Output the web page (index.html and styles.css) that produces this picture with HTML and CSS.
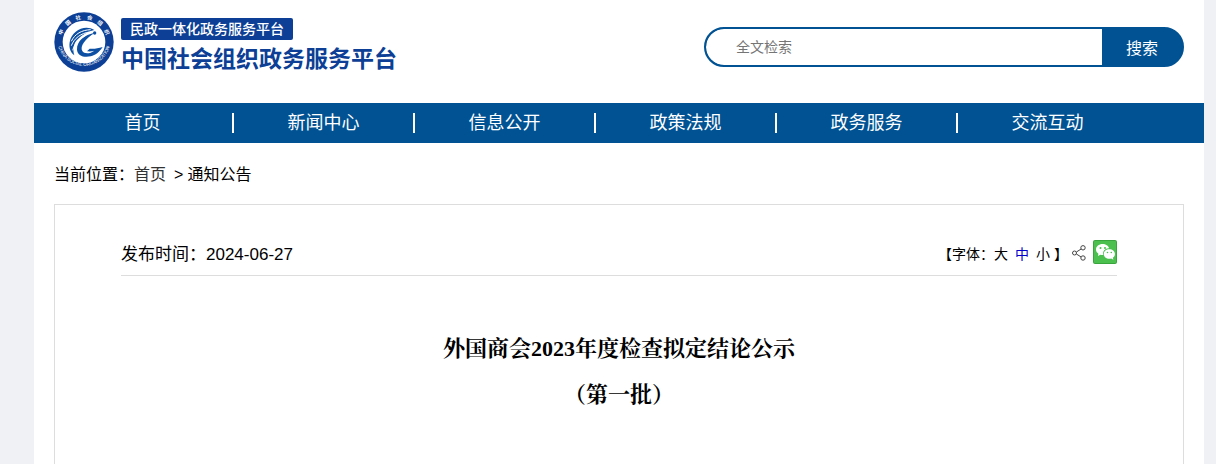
FILE: index.html
```html
<!DOCTYPE html>
<html lang="zh-CN">
<head>
<meta charset="utf-8">
<title>中国社会组织政务服务平台</title>
<link rel="stylesheet" href="styles.css">
</head>
<body>
<div class="page">
  <header class="header">
    <a class="brand" href="#">
      <svg class="emblem" viewBox="0 0 180 180" aria-hidden="true">
        <defs>
          <path id="arc-top" d="M21 90a69 69 0 0 1 138 0"/>
          <path id="arc-bottom" d="M10 82a80 80 0 0 0 160 0"/>
        </defs>
        <circle cx="90" cy="90" r="89" fill="#0c3f95"/>
        <circle cx="90" cy="90" r="64" fill="#fff"/>
        <text class="ring-cn" text-anchor="middle"><textPath href="#arc-top" startOffset="50%">中&#8195;国&#8195;社&#8195;会&#8195;组&#8195;织</textPath></text>
        <text class="ring-en" text-anchor="middle"><textPath href="#arc-bottom" startOffset="50%">CHINA SOCIAL ORGANIZATION</textPath></text>
        <path fill="#0c4fa3" d="M121 54C93 37 53 55 47 91c-3 19 4 32 14 39-6-19-2-37 11-49 14-14 31-23 49-27z"/>
        <path fill="#0c4fa3" d="M123 62C91 68 68 87 69 113c1 17 19 25 41 20 15-4 25-12 36-28-15 5-27 6-39 5l-8 8c9 1 15 0 22-2-13 10-31 10-36 1-8-14 8-37 38-55z"/>
        <g fill="none" stroke="#fff" stroke-width="3"><path d="M52 88c10-22 31-34 58-35"/><path d="M52 101c9-23 29-37 54-41"/><path d="M56 115c6-20 19-34 38-44"/></g>
        <circle cx="122" cy="63" r="5" fill="#0c4fa3"/>
      </svg>
      <span class="brand-text">
        <span class="brand-tag">民政一体化政务服务平台</span>
        <span class="brand-name">中国社会组织政务服务平台</span>
      </span>
    </a>
    <form class="search">
      <input class="search-input" type="text" placeholder="全文检索" aria-label="全文检索">
      <button class="search-button" type="button">搜索</button>
    </form>
  </header>
  <nav class="nav">
    <a href="#">首页</a>
    <a href="#">新闻中心</a>
    <a href="#">信息公开</a>
    <a href="#">政策法规</a>
    <a href="#">政务服务</a>
    <a href="#">交流互动</a>
  </nav>
  <div class="crumbs">当前位置：<a href="#">首页</a><span class="crumb-sep">&gt;</span><span>通知公告</span></div>
  <main class="article">
    <div class="meta">
      <span class="date">发布时间：2024-06-27</span>
      <div class="tools">
        <div class="sizes">
          <span>【字体：</span>
          <button type="button">大</button>
          <button type="button" class="current">中</button>
          <button type="button">小</button>
          <span class="close">】</span>
        </div>
        <a class="share" href="#" aria-label="分享">
          <svg viewBox="0 0 14 16" fill="none" stroke="#444"><circle cx="2.5" cy="8" r="2"/><circle cx="11" cy="2.8" r="2.2"/><circle cx="11" cy="13" r="2.2"/><path d="M4.4 7l4.7-3M4.400 9l4.700 3"/></svg>
        </a>
        <a class="wechat" href="#" aria-label="微信">
          <svg viewBox="0 0 24 24">
            <rect width="24" height="24" rx="2" fill="#38a53c"/>
            <rect x="1" y="1" width="22" height="22" rx="1" fill="#4bc04f"/>
            <path fill="#fff" d="M9.5 4C5.900 4 3 6.400 3 9.500c0 1.800.9 3.200 2.400 4.200L5 16l2.300-1.300c1 .3 2 .4 3 .3-1-4 2-7 5.700-6.800C15.500 5.700 12.800 4 9.500 4z"/>
            <path fill="#fff" d="M16.300 9.300c-3.100 0-5.500 2-5.500 4.700s2.400 4.800 5.500 4.800c.7 0 1.300-.1 1.900-.3l2.200 1.300-.5-2c1.300-.9 2-2.200 2-3.800 0-2.700-2.500-4.700-5.600-4.700z"/>
            <g fill="#4bc04f"><circle cx="7.500" cy="8" r="1"/><circle cx="12" cy="8" r="1"/><circle cx="14.500" cy="12.500" r=".8"/><circle cx="18.300" cy="12.500" r=".8"/></g>
          </svg>
        </a>
      </div>
    </div>
    <h1 class="title">外国商会2023年度检查拟定结论公示<br>（第一批）</h1>
  </main>
</div>
</body>
</html>
```
FILE: styles.css
```css
* {
  box-sizing: border-box;
}

body {
  margin: 0;
  padding: 0 12px 0 34px;
  background: #f0f1f4;
  color: #000;
  font-family: "Liberation Sans", "Noto Sans CJK SC", sans-serif;
  font-size: 16px;
}

a {
  color: inherit;
  text-decoration: none;
}

button {
  border: 0;
  padding: 0;
  background: none;
  color: inherit;
  font: inherit;
  cursor: pointer;
}

svg {
  display: block;
}

.page {
  display: flex;
  flex-direction: column;
  min-height: 100vh;
  background: #fff;
}

.header {
  display: flex;
  justify-content: space-between;
  align-items: flex-start;
  padding: 12px 20px 27px;
}

.brand {
  display: flex;
  gap: 7px;
  color: #0c3f95;
}

.emblem {
  width: 60px;
  height: 60px;
}

.ring-cn {
  fill: #fff;
  font: bold 16px "Noto Sans CJK SC", sans-serif;
}

.ring-en {
  fill: #fff;
  font: 14px "Liberation Sans", sans-serif;
}

.brand-text {
  display: flex;
  flex-direction: column;
  align-items: flex-start;
  gap: 2px;
  padding-top: 6px;
}

.brand-tag {
  padding: 0 9px;
  border-radius: 2px;
  background: #0c3f95;
  color: #fff;
  font-size: 14px;
  font-weight: 500;
  line-height: 22px;
}

.brand-name {
  font-size: 23px;
  font-weight: bold;
  line-height: 34px;
}

.search {
  display: flex;
  flex: 0 1 480px;
  height: 40px;
  margin-top: 15px;
  border: 2px solid #005293;
  border-radius: 20px;
  background: #005293;
  overflow: hidden;
}

.search-input {
  flex: 1;
  min-width: 0;
  padding: 0 30px;
  border: 0;
  border-radius: 18px 0 0 18px;
  background: #fff;
  font: inherit;
  font-size: 14px;
}

.search-input::placeholder {
  color: #757575;
}

.search-button {
  flex: 0 0 80px;
  color: #fff;
}

.nav {
  display: flex;
  align-items: center;
  height: 40px;
  padding: 0 65px 0 19px;
  background: #005293;
  color: #fff;
  font-size: 18px;
  line-height: 20px;
}

.nav a {
  flex: 1;
  border-right: 2px solid #fff;
  text-align: center;
}

.nav a:last-child {
  border-color: transparent;
}

.crumbs {
  padding: 20px 20px 18px;
  line-height: 23px;
}

.crumbs a {
  color: #333;
}

.crumb-sep {
  margin: 0 4px 0 8px;
}

.article {
  flex: 1;
  margin: 0 20px;
  padding: 35px 66px 0;
  border: 1px solid #ddd;
  border-bottom: 0;
}

.meta {
  display: flex;
  justify-content: space-between;
  align-items: flex-start;
  padding-bottom: 5px;
  border-bottom: 1px solid #ddd;
}

.date {
  font-size: 17px;
  line-height: 30px;
}

.tools {
  display: flex;
  align-items: flex-start;
}

.sizes {
  display: flex;
  gap: 7px;
  font-size: 14px;
  line-height: 28px;
}

.sizes span:first-child {
  margin-right: -7px;
}

.sizes .current {
  color: #00c;
}

.sizes .close {
  margin-left: -3px;
}

.share {
  width: 14px;
  margin: 5px 7px 0 4px;
}

.wechat {
  width: 24px;
}

.title {
  margin: 50px 0 0;
  font-family: "Liberation Serif", "Noto Serif CJK SC", "Noto Sans CJK SC", serif;
  font-size: 22px;
  line-height: 46px;
  text-align: center;
}
```
